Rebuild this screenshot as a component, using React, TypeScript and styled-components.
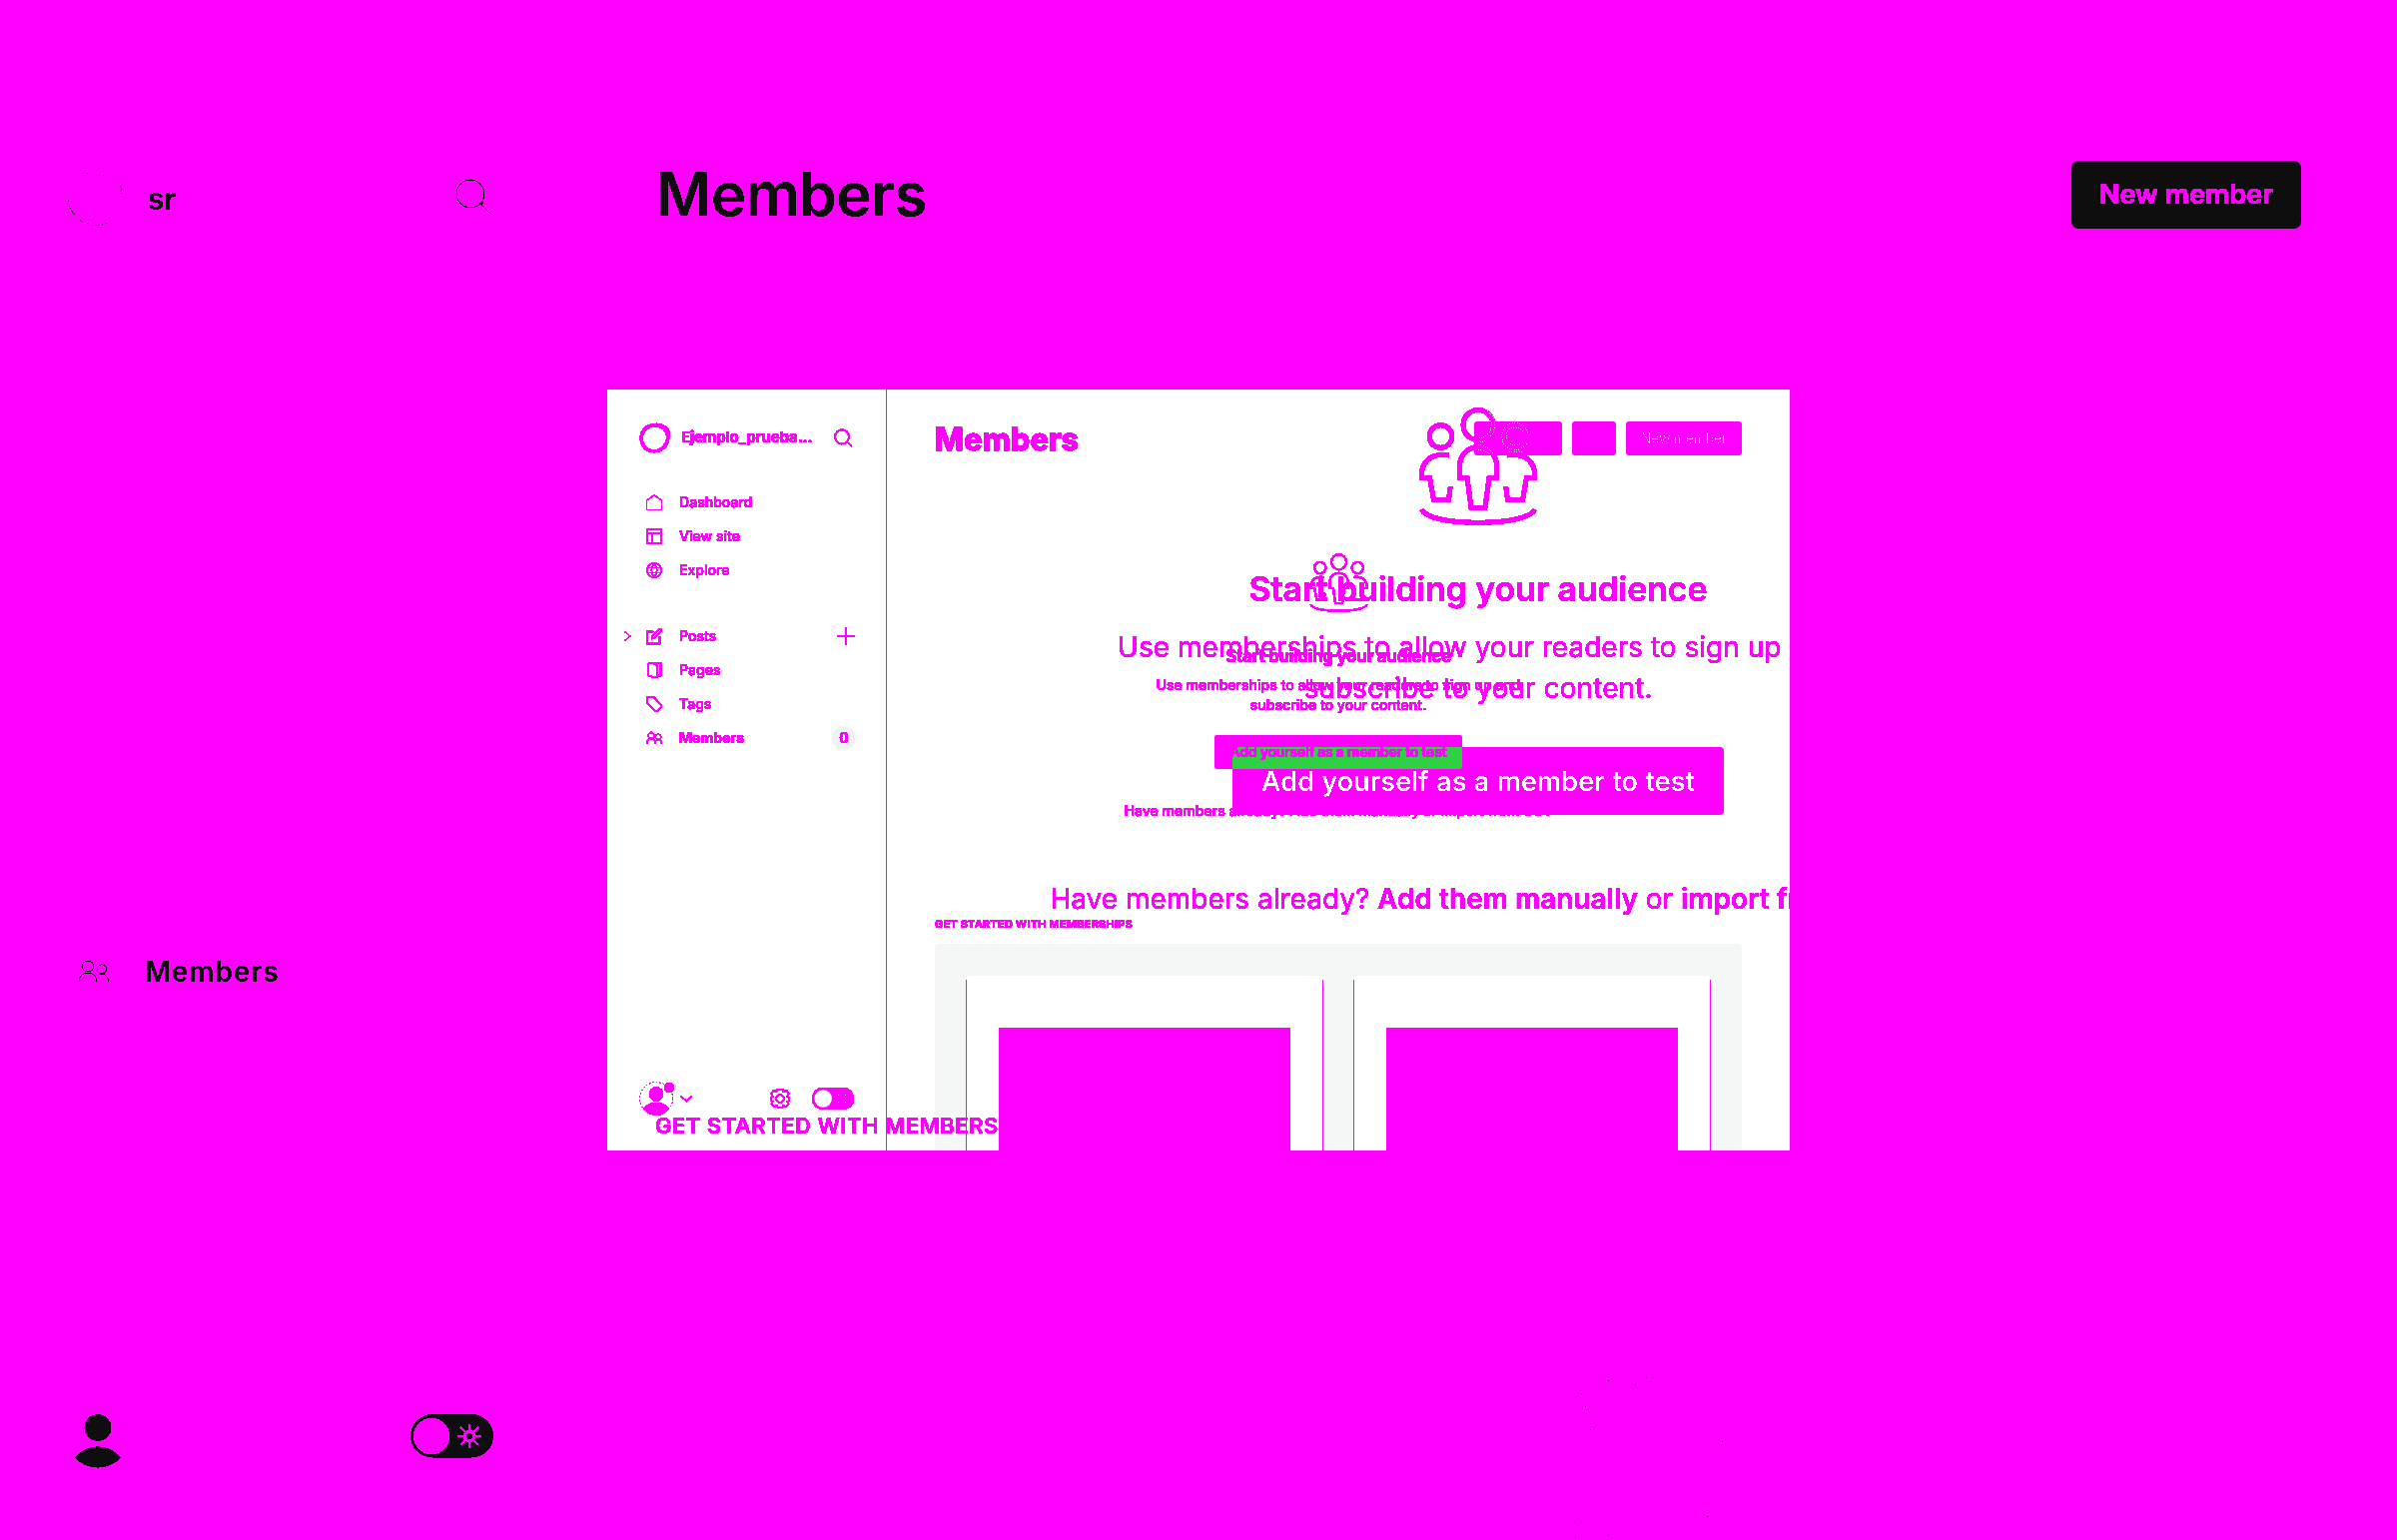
import React from 'react';
import styled, { createGlobalStyle } from 'styled-components';

const MAGENTA = '#ff00ff';
const INK = '#0e0e0e';
const WHITE = '#ffffff';

const GlobalStyle = createGlobalStyle`
  *, *::before, *::after { box-sizing: border-box; }
  body { margin: 0; background: ${MAGENTA}; font-family: Inter, "Liberation Sans", sans-serif; }
  svg { display: block; flex: none; }
`;

type TextProps = {
  $size: number;
  $weight?: number;
  $line?: number;
  $spacing?: number;
  $color?: string;
  $stroke?: number;
  $edge?: 'fat' | 'soft' | 'mid' | 'thin';
};

const Text = styled.div<TextProps>`
  font-size: ${p => p.$size}px;
  font-weight: ${p => p.$weight ?? 500};
  line-height: ${p => p.$line ?? 20}px;
  letter-spacing: ${p => p.$spacing ?? 0}px;
  color: ${p => p.$color ?? MAGENTA};
  -webkit-text-stroke: ${p => p.$stroke ?? 0}px ${p => p.$color ?? MAGENTA};
  white-space: nowrap;
  filter: url(#${p => p.$edge ?? 'fat'});
`;

const Strong = styled.b`
  font-weight: 600;
`;

const Filters = styled.svg`
  position: absolute;
  width: 0;
  height: 0;
`;

/* ---------- page ---------- */

const Page = styled.div`
  position: relative;
  display: flex;
  width: 2400px;
  height: 1542px;
  overflow: hidden;
  background: ${MAGENTA};
`;

const PageSidebar = styled.aside`
  display: flex;
  flex-direction: column;
  width: 560px;
  padding: 165px 66px 72px 68px;
`;

const SiteRow = styled.div`
  display: flex;
  align-items: center;
  height: 68px;
  gap: 26px;
`;

const PageSearch = styled.svg`
  margin: 0 0 4px auto;
`;

const PageNavRow = styled.div`
  display: flex;
  align-items: center;
  gap: 36px;
  height: 44px;
  margin-top: 718px;
  padding-left: 10px;
`;

const PageFooter = styled.div`
  display: flex;
  justify-content: space-between;
  margin-top: auto;
  height: 55px;
  padding: 0 0 0 7px;
`;

const PageMain = styled.main`
  display: flex;
  flex: 1;
  flex-direction: column;
  padding: 161px 96px 0 97px;
`;

const PageHeader = styled.header`
  display: flex;
  justify-content: space-between;
  height: 68px;
`;

const DarkButton = styled.button`
  display: flex;
  justify-content: center;
  align-items: center;
  width: 230px;
  height: 68px;
  padding: 0;
  border: 0;
  border-radius: 7px;
  background: ${INK};
  font-family: inherit;
`;

const Specks = styled.svg`
  margin: auto 0 0 913px;
`;

/* ---------- panel ---------- */

const Panel = styled.section`
  position: absolute;
  left: 608px;
  top: 390px;
  display: flex;
  width: 1184px;
  height: 762px;
  overflow: hidden;
  background: ${WHITE};
`;

const Sidebar = styled.aside`
  display: flex;
  flex-direction: column;
  width: 280px;
  padding: 31px 32px 34px 17px;
  border-right: 1px solid ${MAGENTA};
`;

const Brand = styled.div`
  display: flex;
  align-items: center;
  height: 34px;
  padding-left: 15px;
  gap: 11px;
`;

const Trailing = styled.div`
  margin: 0 1px 0 auto;
`;

const NavGroup = styled.nav<{ $top: number }>`
  display: flex;
  flex-direction: column;
  margin-top: ${p => p.$top}px;
`;

const NavRow = styled.div`
  display: grid;
  grid-template-columns: 21px 34px 1fr auto;
  align-items: center;
  height: 34px;
  margin-right: -2px;
`;

const Glyph = styled.svg`
  overflow: visible;
  filter: url(#soft);
`;

const Count = styled.span`
  display: flex;
  justify-content: center;
  width: 24px;
  height: 24px;
  border-radius: 50%;
  background: #f1f2f4;
`;

const Footer = styled.div`
  display: flex;
  align-items: center;
  height: 36px;
  margin-top: auto;
  padding-left: 14px;
`;

const Gear = styled(Glyph)`
  margin-left: 77px;
`;

const Toggle = styled(Glyph)`
  margin-left: auto;
`;

const Main = styled.main`
  display: flex;
  flex: 1;
  flex-direction: column;
  padding: 32px 48px 0 48px;
`;

const Header = styled.header`
  display: flex;
  height: 34px;
  gap: 10px;
`;

const Title = styled.div`
  margin: 1px auto 0 0;
`;

const Chip = styled.div<{ $width: number }>`
  display: flex;
  justify-content: center;
  width: ${p => p.$width}px;
  height: 34px;
  border-radius: 3px;
  background: ${MAGENTA};
`;

const Empty = styled.div`
  display: flex;
  flex-direction: column;
  align-items: center;
  margin-top: 98px;
`;

const EmptyTitle = styled.div`
  margin-top: 32px;
  margin-bottom: 7px;
`;

const EmptyButton = styled.div`
  width: 248px;
  height: 34px;
  margin: 20px 0 32px;
  border-radius: 2px;
  background: ${MAGENTA};
`;

const SectionLabel = styled.div`
  margin-top: 95px;
`;

const Cards = styled.div`
  display: flex;
  flex: 1;
  gap: 30px;
  margin-top: 12px;
  padding: 32px 31px 0;
  border-radius: 4px 4px 0 0;
  background: #f4f6f6;
`;

const Card = styled.article`
  display: flex;
  flex: 1;
  padding: 52px 33px 0;
  border-radius: 4px 4px 0 0;
  background:
    linear-gradient(${MAGENTA}, ${MAGENTA}) 0 4px / 1px 100% no-repeat,
    linear-gradient(${MAGENTA}, ${MAGENTA}) 100% 4px / 1px 100% no-repeat,
    ${WHITE};
`;

const CardImage = styled.div`
  flex: 1;
  background: ${MAGENTA};
`;

/* ---------- enlarged layer ---------- */

const Overlay = styled.div`
  position: absolute;
  inset: 0 auto auto 48px;
  display: flex;
  flex-direction: column;
  align-items: center;
  width: 1648px;
  height: 762px;
  padding-top: 18px;
`;

const OverlayTitle = styled.div`
  margin: 44px 0 18px;
`;

const BigButton = styled.div`
  position: relative;
  display: flex;
  justify-content: center;
  width: 492px;
  height: 68px;
  margin: 38px 0 64px;
  padding-top: 14px;
  border-radius: 0 4px 4px 0;
  background: ${MAGENTA};
`;

const Overlap = styled.div`
  position: absolute;
  left: 0;
  top: 0;
  width: 230px;
  height: 22px;
  overflow: hidden;
  border-radius: 0 0 3px 0;
  background: #30d044;
`;

const OverlapLabel = styled.div`
  display: flex;
  justify-content: center;
  width: 248px;
  margin: -5px 0 0 -18px;
`;

const OverlayLabel = styled.div`
  align-self: flex-start;
  margin-top: 192px;
`;

const IconPath = ({ d, w = 1.7 }: { d: string; w?: number }) => (
  <path d={d} fill="none" stroke={MAGENTA} strokeWidth={w} />
);

const NavIcon = ({ children }: { children: React.ReactNode }) => (
  <Glyph width="18" height="18" viewBox="0 0 18 18">{children}</Glyph>
);

const People = ({ size }: { size: number }) => (
  <svg width={size} height={size} viewBox="21 18 118 118" fill="none" stroke={MAGENTA} strokeWidth="5.300" shapeRendering="crispEdges">
    <circle cx="42.500" cy="47" r="11.300" />
    <circle cx="117.500" cy="47" r="11.300" />
    <circle cx="80" cy="35.500" r="15" />
    <path d="M61.500 88.300V76A18.500 18.500 0 0 1 98.500 76V88.300M59 88.300H69L73 118.300H87L91 88.300H101" />
    <path d="M51 66Q48 65.500 43 65.500C32 65.500 23.500 74 23.500 84V88.300H31.500L35.500 110.500H50.500L52.300 97" />
    <path d="M109 66Q112 65.500 117 65.500C128 65.500 136.500 74 136.500 84V88.300H128.500L124.500 110.500H109.500L107.700 97" />
    <path d="M23 120C28 129 52 133.300 80 133.300S132 129 137 120" />
    {size > 100 && (
      <g stroke={WHITE} strokeWidth="0.800" strokeDasharray="1 1.400">
        <path d="M89 21A17.500 17.500 0 0 1 80 53" />
        <path d="M88 25A13 13 0 0 1 80 48.500" />
        <path d="M130 43A13.500 13.500 0 1 0 130 51" />
        <path d="M124.500 42A9 9 0 1 0 124.500 52" />
        <path d="M80 55A21 21 0 0 1 95 64M80 60A16 16 0 0 1 91 65M111 62.500H125" />
      </g>
    )}
  </svg>
);

const home = <NavIcon><IconPath d="M1.500 16.500V7L9 1.700L16.500 7V16.500Z" w={1.1} /></NavIcon>;
const site = <NavIcon><IconPath d="M2 2H16V16H2ZM2 5.800H16M7 6V16" /></NavIcon>;
const globe = <NavIcon><IconPath d="M9 1.800A7.200 7.200 0 1 0 9 16.200A7.200 7.200 0 1 0 9 1.800ZM2 6.500H16M2 11.500H16M9 2Q3.500 9 9 16M9 2Q14.500 9 9 16" w={1.2} /></NavIcon>;
const posts = <NavIcon><IconPath d="M8.500 4.500H1.700V16.500H14.500V9M6.800 11.500L7.500 8.600L14.500 1.700H16.300V4L9.600 10.800Z" w={1.4} /></NavIcon>;
const pages = <NavIcon><IconPath d="M3 2H15.500V14.500H12.500M3 2V14.500L8 16H12.300V4.500L8 2.500" w={1.5} /></NavIcon>;
const tags = <NavIcon><IconPath d="M2 2H8.500L16.200 9.800V11.500L12.500 16H10.500L2 8Z" w={1.6} /></NavIcon>;
const members = <NavIcon><IconPath d="M6 3.500A2.900 2.900 0 1 0 6 9.300A2.900 2.900 0 1 0 6 3.500M13 5.500A2.300 2.300 0 1 0 13 10A2.300 2.300 0 1 0 13 5.500M1.700 15V13Q2.200 10 6 10Q9.800 10 10.300 13V15M11 10.800Q16 10 16.300 13.500V15" w={1.3} /></NavIcon>;
const plus = <svg width="19" height="18" viewBox="-1 0 19 18" shapeRendering="crispEdges"><IconPath d="M8 0V18M-1 9H17" w={2} /></svg>;
const chevron = <Glyph width="8" height="10" viewBox="0 0 8 10"><IconPath d="M.8 .5L5.700 5L.8 9.500" w={1.2} /></Glyph>;
const count = <Count><Text $size={14} $weight={700} $line={24}>0</Text></Count>;

type Item = { label: string; icon: React.ReactNode; lead?: React.ReactNode; tail?: React.ReactNode; bold?: boolean };

const groups: { top: number; items: Item[] }[] = [
  { top: 31, items: [
    { label: 'Dashboard', icon: home },
    { label: 'View site', icon: site },
    { label: 'Explore', icon: globe },
  ] },
  { top: 32, items: [
    { label: 'Posts', icon: posts, lead: chevron, tail: plus },
    { label: 'Pages', icon: pages },
    { label: 'Tags', icon: tags },
    { label: 'Members', icon: members, tail: count, bold: true },
  ] },
];

const specks = [[1648, 1379], [1654, 1379], [1610, 1382], [1637, 1386], [1583, 1395], [1587, 1408], [1592, 1431], [1724, 1443], [1709, 1518], [1583, 1522], [1610, 1537], [1577, 1539]];

export default function App() {
  return (
    <>
      <GlobalStyle />
      <Filters aria-hidden="true">
        <filter id="fat" colorInterpolationFilters="sRGB"><feComponentTransfer><feFuncA type="linear" slope="60" intercept="-1" /></feComponentTransfer></filter>
        <filter id="soft" colorInterpolationFilters="sRGB"><feComponentTransfer><feFuncA type="linear" slope="40" intercept="-5" /></feComponentTransfer></filter>
        <filter id="mid" colorInterpolationFilters="sRGB"><feComponentTransfer><feFuncA type="linear" slope="40" intercept="-16" /></feComponentTransfer></filter>
        <filter id="thin" colorInterpolationFilters="sRGB"><feComponentTransfer><feFuncA type="linear" slope="60" intercept="-59" /></feComponentTransfer></filter>
      </Filters>
      <Page>
        <PageSidebar>
          <SiteRow>
            <svg width="54" height="54" viewBox="0 0 54 54" fill="#222" shapeRendering="crispEdges">
              <path d="M18 1h2v1h-2zM35 3h1v1h-1zM52 14h1v1h-1zM53 16h1v3h-1zM54 19h-1v1h1zM53 21h1v1h-1zM0 28h1v2h-1zM1 34h1v1h-1zM2 36h1v1h-1zM3 38h1v2h-1zM4 39h1v2h-1zM5 41h1v1h-1zM6 42h1v1h-1zM12 48h1v1h-1zM13 49h1v1h-1zM19 51h2v1h-2zM27 53h5v1h-5zM34 52h1v1h-1zM37 51h3v1h-3z" />
            </svg>
            <Text $size={30} $weight={600} $line={66} $color={INK} $edge="mid">sr</Text>
            <PageSearch width="37" height="36" viewBox="0 0 37 36" fill="none" stroke={INK} strokeWidth="1" shapeRendering="crispEdges">
              <circle cx="14" cy="15" r="13.800" />
              <path d="M23 24L34 35" />
              <path d="M22.500 26L26 22.500V25Z" fill={INK} />
            </PageSearch>
          </SiteRow>
          <PageNavRow>
            <svg width="31" height="24" viewBox="0 0 31 24" fill="none" stroke={INK} strokeWidth="1" shapeRendering="crispEdges">
              <ellipse cx="10" cy="6.500" rx="5.800" ry="5.400" />
              <ellipse cx="24" cy="9.300" rx="4.800" ry="4.500" />
              <path d="M1.500 22V19Q4 14 7 13.700H13Q17 14.500 18.500 19V22M21 14.700H27Q29.500 16.500 30.300 19.500V22" />
            </svg>
            <Text $size={28} $weight={600} $line={44} $spacing={0.95} $color={INK} $edge="mid">Members</Text>
          </PageNavRow>
          <PageFooter>
            <svg width="46" height="55" viewBox="0 0 46 55" fill={INK} shapeRendering="crispEdges">
              <ellipse cx="23" cy="14.500" rx="13.500" ry="13.300" />
              <path d="M0 44.500C12 29.500 34 29.500 46 44.500C34 58 12 58 0 44.500Z" />
            </svg>
            <svg width="83" height="46" viewBox="0 0 83 46" shapeRendering="crispEdges">
              <rect x="0" y="1" width="83" height="43.500" rx="21.700" fill={INK} />
              <circle cx="21" cy="23" r="18.200" fill={MAGENTA} />
              <circle cx="59" cy="23" r="4.700" fill="none" stroke={MAGENTA} strokeWidth="3" />
              <path d="M59 11V17M59 29V35M47 23H53M65 23H71M50 14L55 19M63 27L68 32M68 14L63 19M55 27L50 32" stroke={MAGENTA} strokeWidth="2.600" />
            </svg>
          </PageFooter>
        </PageSidebar>
        <PageMain>
          <PageHeader>
            <Text $size={60} $weight={600} $line={66} $spacing={-0.5} $color={INK} $edge="mid">Members</Text>
            <DarkButton><Text $size={27} $weight={600} $line={68} $spacing={0.05}>New member</Text></DarkButton>
          </PageHeader>
          <Specks width="160" height="172" viewBox="1570 1370 160 172" shapeRendering="crispEdges">
            {specks.map(([x, y]) => <rect key={`${x}-${y}`} x={x} y={y} width="1" height="1" fill={INK} />)}
          </Specks>
        </PageMain>

        <Panel>
          <Sidebar>
            <Brand>
              <svg width="31" height="31" viewBox="0 0 31 31" shapeRendering="crispEdges">
                <path fillRule="evenodd" fill={MAGENTA} d="M17 0.500C25 0 29 5 30.500 8C31.500 14 31 20 28 24C24 29 20 30.500 16 30.500C8 31 3 27 1 21C-.5 14 0 9 4 5.500C7 2.500 11 1 17 .5ZM15.500 4.500C9 5 5 9.500 4 15C4 22 7.500 26.500 14.500 27.300C21 27 26 22 27 15C26.500 8.500 22 4.500 15.500 4.500Z" />
              </svg>
              <Text $size={15} $weight={700} $line={36} $spacing={-0.12}>Ejemplo_prueba...</Text>
              <Trailing>
                <Glyph width="20" height="19" viewBox="0 0 20 19"><IconPath d="M9 1.300A7 7 0 1 0 9 15.300A7 7 0 1 0 9 1.300M14 13.500L18.800 18" /></Glyph>
              </Trailing>
            </Brand>
            {groups.map(group => (
              <NavGroup key={group.top} $top={group.top}>
                {group.items.map(item => (
                  <NavRow key={item.label}>
                    <span>{item.lead}</span>
                    {item.icon}
                    <Text $size={14} $weight={item.bold ? 700 : 500} $line={34} $spacing={0.04}>{item.label}</Text>
                    {item.tail}
                  </NavRow>
                ))}
              </NavGroup>
            ))}
            <Footer>
              <Glyph width="54" height="36" viewBox="0 0 54 36" fill={MAGENTA}>
                <circle cx="18" cy="18" r="16.500" fill="none" stroke={MAGENTA} strokeWidth="0.500" strokeDasharray="1.500 2" />
                <ellipse cx="18" cy="13.500" rx="7" ry="7.300" />
                <path d="M5 28C11 20 25 20 31 28C25 37 11 37 5 28Z" />
                <circle cx="31" cy="7" r="5" />
                <path d="M42.500 15.500L48.300 20.500L54 15.500" fill="none" stroke={MAGENTA} strokeWidth="1.400" />
              </Glyph>
              <Gear width="22" height="22" viewBox="0 0 22 22" fill="none" stroke={MAGENTA} strokeWidth="1.600">
                <path d="M8.500 1.700H13.500L14.500 4L17.500 3L20 6L18.500 8.500V9L20.300 10V12.500L18.500 14L19.500 16.500L17 19L14.500 18L13 20.300H9L7.500 18L5 19L2.500 16.500L3.500 14L1.700 12.500V10L3.500 9V8.500L2 6L4.500 3L7.500 4Z" />
                <circle cx="11" cy="11" r="3.900" />
              </Gear>
              <Toggle width="42" height="22" viewBox="0 0 42 22">
                <rect width="42" height="22" rx="10.500" fill={MAGENTA} />
                <circle cx="11.200" cy="11" r="8.700" fill={WHITE} />
                <path d="M26 7h1v1h-1zM33 7h1v1h-1zM26 14h1v1h-1zM33 14h1v1h-1z" fill={WHITE} />
              </Toggle>
            </Footer>
          </Sidebar>

          <Main>
            <Header>
              <Title><Text $size={31} $weight={700} $line={34} $spacing={0.05} $stroke={0.5}>Members</Text></Title>
              <Chip $width={88} />
              <Chip $width={44} />
              <Chip $width={116}><Text $size={14} $weight={500} $line={34} $spacing={-0.35} $color={WHITE} $edge="thin">New member</Text></Chip>
            </Header>
            <Empty>
              <People size={59} />
              <EmptyTitle><Text $size={17} $weight={700} $line={24} $spacing={-0.32}>Start building your audience</Text></EmptyTitle>
              <Text $size={14} $spacing={0.03}>Use memberships to allow your readers to sign up and</Text>
              <Text $size={14} $spacing={0.03}>subscribe to your content.</Text>
              <EmptyButton />
              <Text $size={14} $spacing={0.03}>Have members already? Add them manually or import from CSV</Text>
            </Empty>
            <SectionLabel><Text $size={11} $weight={700} $line={16} $spacing={0.2}>GET STARTED WITH MEMBERSHIPS</Text></SectionLabel>
            <Cards>
              <Card><CardImage /></Card>
              <Card><CardImage /></Card>
            </Cards>
          </Main>

          <Overlay>
            <People size={118} />
            <OverlayTitle><Text $size={34} $weight={600} $line={40} $spacing={-0.16} $edge="soft">Start building your audience</Text></OverlayTitle>
            <Text $size={28} $weight={400} $line={41} $spacing={0.02} $edge="soft">Use memberships to allow your readers to sign up and</Text>
            <Text $size={28} $weight={400} $line={41} $spacing={0.08} $edge="soft">subscribe to your content.</Text>
            <BigButton>
              <Overlap><OverlapLabel><Text $size={14} $weight={600} $spacing={-0.2}>Add yourself as a member to test</Text></OverlapLabel></Overlap>
              <Text $size={27} $weight={500} $line={42} $spacing={0.22} $color={WHITE} $edge="mid">Add yourself as a member to test</Text>
            </BigButton>
            <Text $size={28} $weight={400} $line={40} $edge="soft">Have members already? <Strong>Add them manually</Strong> or <Strong>import from CSV</Strong></Text>
            <OverlayLabel><Text $size={22} $weight={600} $line={30} $spacing={0.5} $edge="soft">GET STARTED WITH MEMBERS</Text></OverlayLabel>
          </Overlay>
        </Panel>
      </Page>
    </>
  );
}
